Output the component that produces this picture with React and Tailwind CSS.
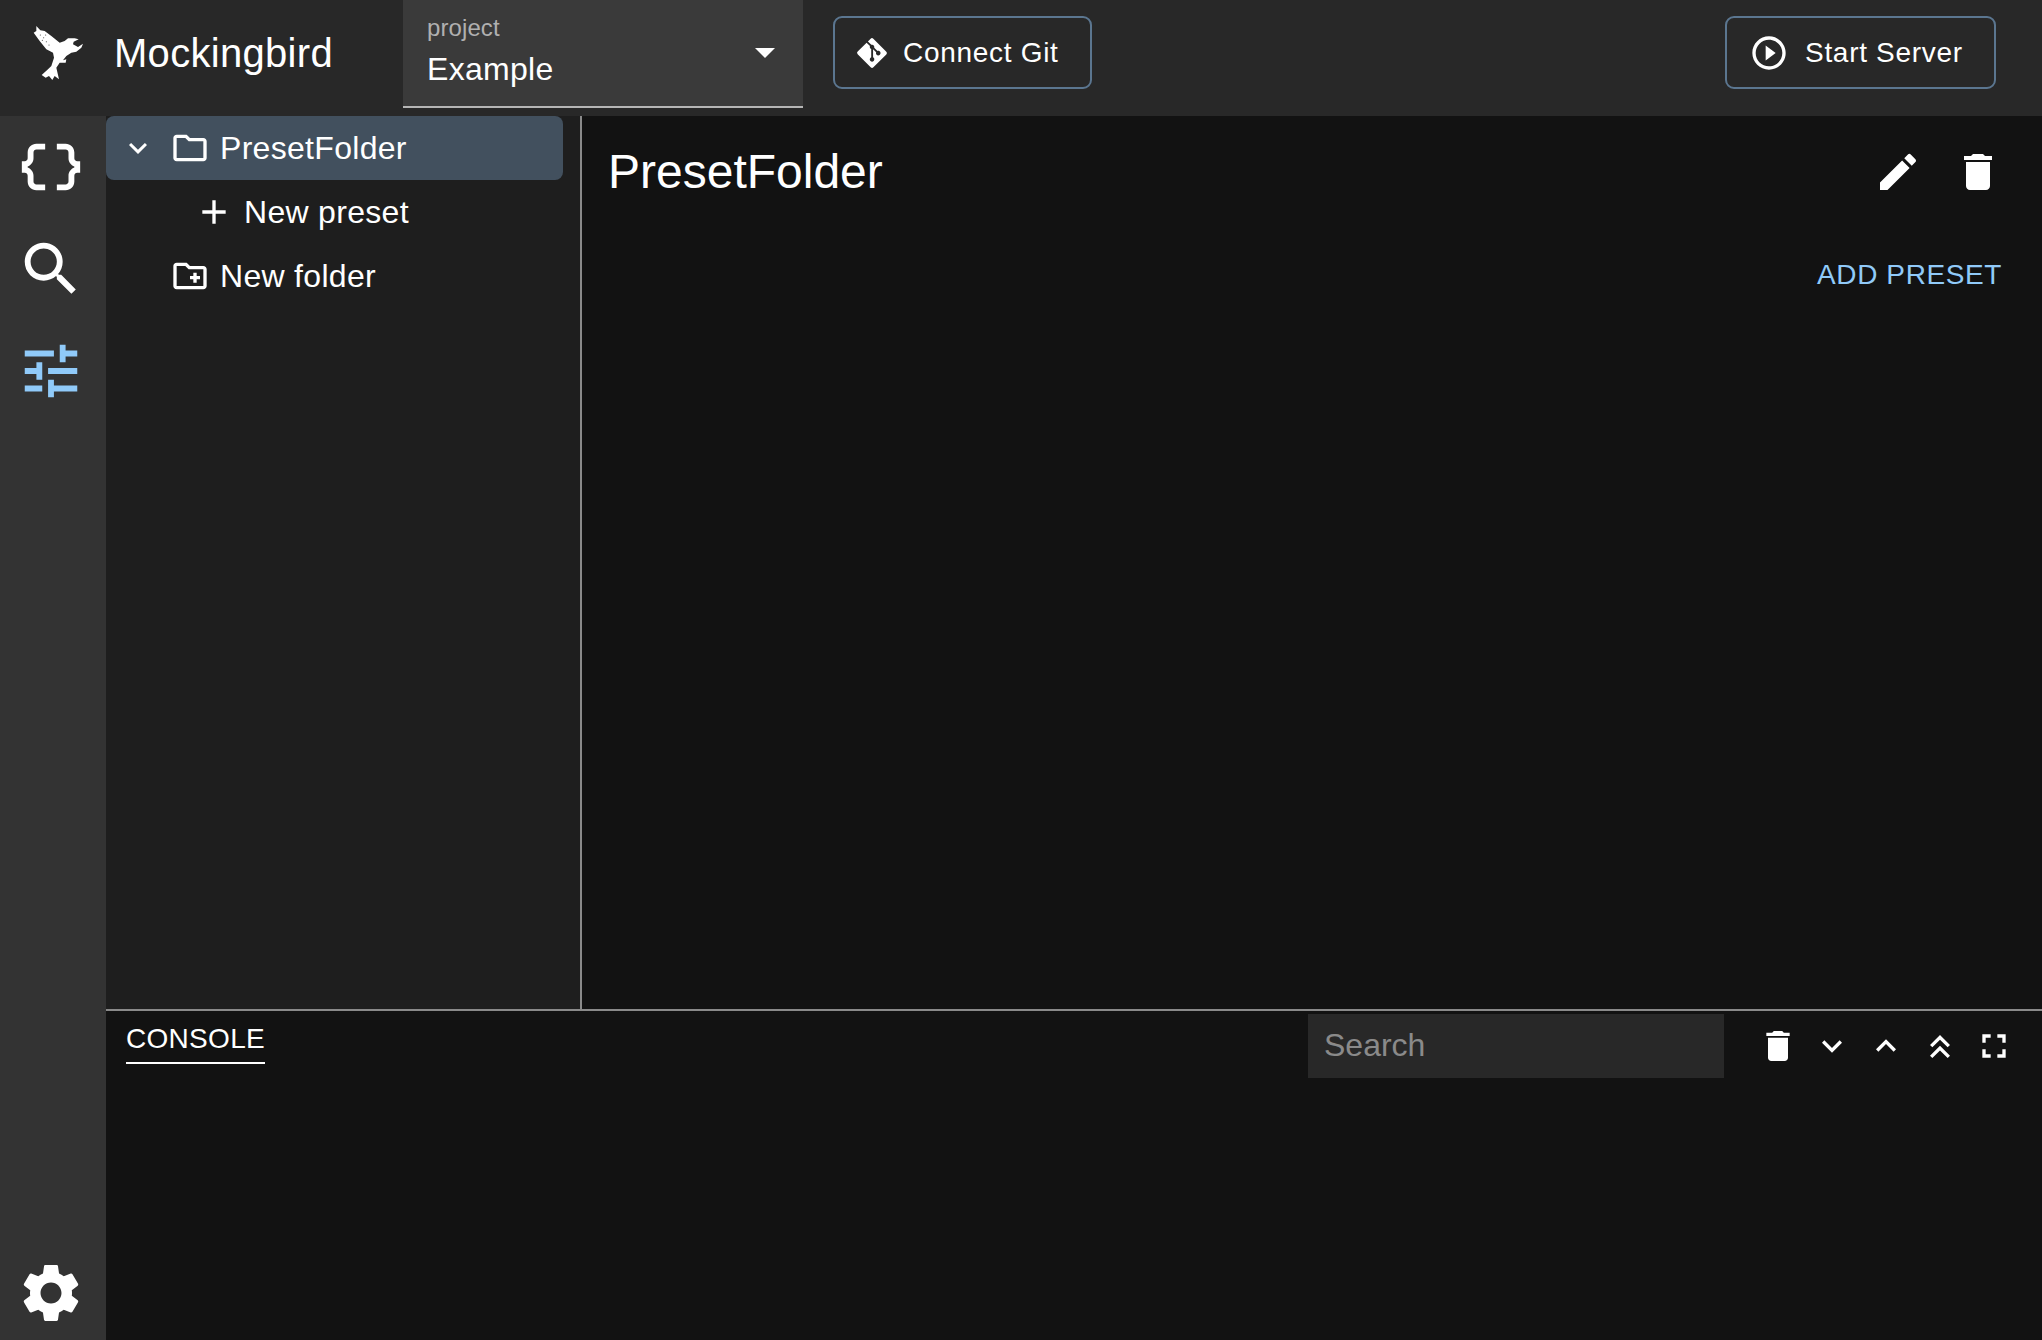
import React from "react";
import { FaGitAlt } from "react-icons/fa";

const PATHS = {
  dataObject:
    "M4 7v2c0 .55-.45 1-1 1H2v4h1c.55 0 1 .45 1 1v2c0 1.65 1.35 3 3 3h3v-2H7c-.55 0-1-.45-1-1v-2c0-1.3-.84-2.42-2-2.83v-.34C5.16 11.42 6 10.3 6 9V7c0-.55.45-1 1-1h3V4H7C5.35 4 4 5.35 4 7zm17 3c-.55 0-1-.45-1-1V7c0-1.65-1.35-3-3-3h-3v2h3c.55 0 1 .45 1 1v2c0 1.3.84 2.42 2 2.83v.34c-1.16.41-2 1.52-2 2.83v2c0 .55-.45 1-1 1h-3v2h3c1.65 0 3-1.35 3-3v-2c0-.55.45-1 1-1h1v-4h-1z",
  search:
    "M15.5 14h-.79l-.28-.27C15.41 12.59 16 11.11 16 9.5 16 5.91 13.09 3 9.5 3S3 5.91 3 9.5 5.91 16 9.5 16c1.61 0 3.09-.59 4.23-1.57l.27.28v.79l5 4.99L20.49 19l-4.99-5zm-6 0C7.01 14 5 11.99 5 9.5S7.01 5 9.5 5 14 7.01 14 9.5 11.99 14 9.5 14z",
  tune: "M3 17v2h6v-2H3zM3 5v2h10V5H3zm10 16v-2h8v-2h-8v-2h-2v6h2zM7 9v2H3v2h4v2h2V9H7zm14 4v-2H11v2h10zm-6-4h2V7h4V5h-4V3h-2v6z",
  settings:
    "M19.14 12.94c.04-.3.06-.61.06-.94 0-.32-.02-.64-.07-.94l2.03-1.58c.18-.14.23-.41.12-.61l-1.92-3.32c-.12-.22-.37-.29-.59-.22l-2.39.96c-.5-.38-1.03-.7-1.62-.94l-.36-2.54c-.04-.24-.24-.41-.48-.41h-3.84c-.24 0-.43.17-.47.41l-.36 2.54c-.59.24-1.13.57-1.62.94l-2.39-.96c-.22-.08-.47 0-.59.22L2.74 8.87c-.12.21-.08.47.12.61l2.03 1.58c-.05.3-.09.63-.09.94s.02.64.07.94l-2.03 1.58c-.18.14-.23.41-.12.61l1.92 3.32c.12.22.37.29.59.22l2.39-.96c.5.38 1.03.7 1.62.94l.36 2.54c.05.24.24.41.48.41h3.84c.24 0 .44-.17.47-.41l.36-2.54c.59-.24 1.13-.56 1.62-.94l2.39.96c.22.08.47 0 .59-.22l1.92-3.32c.12-.22.07-.47-.12-.61l-2.01-1.58zM12 15.6c-1.98 0-3.6-1.62-3.6-3.6s1.62-3.6 3.6-3.6 3.6 1.62 3.6 3.6-1.62 3.6-3.6 3.6z",
  expandMore: "M16.59 8.59 12 13.17 7.41 8.59 6 10l6 6 6-6z",
  expandLess: "m12 8-6 6 1.41 1.41L12 10.83l4.59 4.58L18 14z",
  doubleUp:
    "M12 5.4l-6 6 1.41 1.41L12 8.23l4.59 4.58L18 11.4zM12 11.8l-6 6 1.41 1.41L12 14.63l4.59 4.58L18 17.8z",
  fullscreen:
    "M7 14H5v5h5v-2H7v-3zm-2-4h2V7h3V5H5v5zm12 7h-3v2h5v-5h-2v3zM14 5v2h3v3h2V5h-5z",
  trash:
    "M6 19c0 1.1.9 2 2 2h8c1.1 0 2-.9 2-2V7H6v12zM19 4h-3.5l-1-1h-5l-1 1H5v2h14V4z",
  edit: "M3 17.25V21h3.75L17.81 9.94l-3.75-3.75L3 17.25zM20.71 7.04c.39-.39.39-1.02 0-1.41l-2.34-2.34a.9959.9959 0 0 0-1.41 0l-1.83 1.83 3.75 3.75 1.83-1.83z",
  folder:
    "M9.17 6l2 2H20v10H4V6h5.17M10 4H4c-1.1 0-1.99.9-1.99 2L2 18c0 1.1.9 2 2 2h16c1.1 0 2-.9 2-2V8c0-1.1-.9-2-2-2h-8l-2-2z",
  newFolder:
    "M20 6h-8l-2-2H4c-1.11 0-1.99.89-1.99 2L2 18c0 1.11.89 2 2 2h16c1.11 0 2-.89 2-2V8c0-1.11-.89-2-2-2zm0 12H4V6h5.17l2 2H20v10zm-8-4h2v2h2v-2h2v-2h-2v-2h-2v2h-2z",
  add: "M19 13h-6v6h-2v-6H5v-2h6V5h2v6h6v2z",
  play: "m10 16.5 6-4.5-6-4.5v9zM12 2C6.48 2 2 6.48 2 12s4.48 10 10 10 10-4.48 10-10S17.52 2 12 2zm0 18c-4.41 0-8-3.59-8-8s3.59-8 8-8 8 3.59 8 8-3.59 8-8 8z",
  caret: "M7 10l5 5 5-5z",
};

const Icon = ({ name, className }) => (
  <svg viewBox="0 0 24 24" fill="currentColor" className={`shrink-0 ${className}`}>
    <path d={PATHS[name]} />
  </svg>
);

/* bird logo, traced from the reference */
const Bird = () => (
  <svg viewBox="70 42 156 168" className="w-[52px] h-[56px] shrink-0" fill="#fff">
    <path d="M80 45 L92 58 L105 60 L125 75 L150 95 L165 90 L175 82 L195 82 L207 85 L192 92 L190 100 L205 108 L220 98 L215 110 L200 122 L185 125 L170 135 L160 148 L170 145 L168 155 L150 155 L140 170 L148 205 L135 195 L128 207 L118 195 L108 200 L96 192 L115 175 L125 165 L133 140 L130 125 L110 115 L90 90 L72 65 L80 60 Z" />
    <g fill="#282828">
      <circle cx="92" cy="72" r="1.5" />
      <circle cx="102" cy="80" r="1.5" />
      <circle cx="98" cy="88" r="1.5" />
      <circle cx="110" cy="92" r="1.5" />
      <circle cx="118" cy="102" r="1.5" />
      <circle cx="108" cy="72" r="1.5" />
    </g>
  </svg>
);

const OutlineButton = ({ icon, label, className }) => (
  <button className={`flex items-center h-[73px] border-2 border-[#5b7690] rounded-[9px] text-[28px] tracking-[0.7px] text-white ${className}`}>
    {icon}
    {label}
  </button>
);

const Header = () => (
  <header className="h-[116px] shrink-0 flex bg-[#282828]">
    <div className="w-[403px] shrink-0 flex items-center pl-[33px] pb-[11px]">
      <Bird />
      <span className="ml-[29px] text-[40px] tracking-[0.3px] text-white">Mockingbird</span>
    </div>
    <div className="relative w-[400px] h-[108px] shrink-0 bg-[#3a3a3a] border-b-2 border-[#b5b5b5] pl-6">
      <div className="pt-[13px] text-[24px] leading-[30px] tracking-[0.1px] text-[#b0b0b0]">project</div>
      <div className="mt-[7px] text-[32px] leading-[38px] tracking-[0.3px] text-white">Example</div>
      <Icon name="caret" className="absolute right-[14px] top-[28px] w-12 h-12 text-white" />
    </div>
    <div className="flex-1 flex items-center justify-between pl-[30px] pr-[46px] pb-[11px]">
      <OutlineButton
        className="w-[259px] pl-[20px]"
        icon={<FaGitAlt className="text-[34px] mr-[14px] shrink-0" />}
        label="Connect Git"
      />
      <OutlineButton
        className="w-[271px] pl-[22px]"
        icon={<Icon name="play" className="w-10 h-10 mr-[16px]" />}
        label="Start Server"
      />
    </div>
  </header>
);

const Sidebar = () => (
  <nav className="w-[106px] shrink-0 bg-[#333333] flex flex-col justify-between pl-4 pt-4 pb-3 text-white">
    <div className="flex flex-col gap-8">
      <Icon name="dataObject" className="w-[70px] h-[70px]" />
      <Icon name="search" className="w-[70px] h-[70px]" />
      <Icon name="tune" className="w-[70px] h-[70px] text-[#90caf9]" />
    </div>
    <Icon name="settings" className="w-[70px] h-[70px]" />
  </nav>
);

const Tree = () => (
  <div className="w-[476px] shrink-0 bg-[#1e1e1e] border-r-2 border-[#8a8a8a] pr-[17px] text-[32px] tracking-[0.3px] text-white">
    <div className="h-16 flex items-center pl-[14px] bg-[#42505e] rounded-lg">
      <Icon name="expandMore" className="w-9 h-9" />
      <Icon name="folder" className="w-10 h-10 ml-[14px]" />
      <span className="ml-[10px]">PresetFolder</span>
    </div>
    <div className="h-16 flex items-center pl-[88px]">
      <Icon name="add" className="w-10 h-10" />
      <span className="ml-[10px]">New preset</span>
    </div>
    <div className="h-16 flex items-center pl-16">
      <Icon name="newFolder" className="w-10 h-10" />
      <span className="ml-[10px]">New folder</span>
    </div>
  </div>
);

const Detail = () => (
  <main className="flex-1 bg-[#121212] pl-[26px] pr-10 pt-8 text-white">
    <div className="flex items-center justify-between h-12">
      <h1 className="text-[48px] leading-[48px]">PresetFolder</h1>
      <div className="flex gap-8">
        <Icon name="edit" className="w-12 h-12" />
        <Icon name="trash" className="w-12 h-12" />
      </div>
    </div>
    <div className="mt-[61px] text-right text-[28px] leading-[36px] tracking-[0.6px] text-[#90caf9]">
      ADD PRESET
    </div>
  </main>
);

const Console = () => (
  <section className="h-[331px] shrink-0 bg-[#121212] border-t-2 border-[#8a8a8a] flex items-start pl-5 pr-7 text-white">
    <div className="mt-[11px] h-[42px] border-b-2 border-white text-[28px] leading-[34px] tracking-[0.3px]">CONSOLE</div>
    <div className="ml-auto mt-[3px] flex items-center">
      <input
        placeholder="Search"
        className="w-[416px] h-16 bg-[#282828] pl-4 pb-[1px] text-[32px] outline-none placeholder:text-[#8a8a8a]"
      />
      <div className="ml-[34px] flex gap-[14px]">
        <Icon name="trash" className="w-10 h-10" />
        <Icon name="expandMore" className="w-10 h-10" />
        <Icon name="expandLess" className="w-10 h-10" />
        <Icon name="doubleUp" className="w-10 h-10" />
        <Icon name="fullscreen" className="w-10 h-10" />
      </div>
    </div>
  </section>
);

const App = () => (
  <div className="w-[2042px] h-[1340px] overflow-hidden flex flex-col bg-[#121212] font-['Liberation_Sans',Arial,sans-serif]">
    <Header />
    <div className="flex-1 flex min-h-0">
      <Sidebar />
      <div className="flex-1 flex flex-col min-w-0">
        <div className="flex-1 flex min-h-0">
          <Tree />
          <Detail />
        </div>
        <Console />
      </div>
    </div>
  </div>
);

export default App;
